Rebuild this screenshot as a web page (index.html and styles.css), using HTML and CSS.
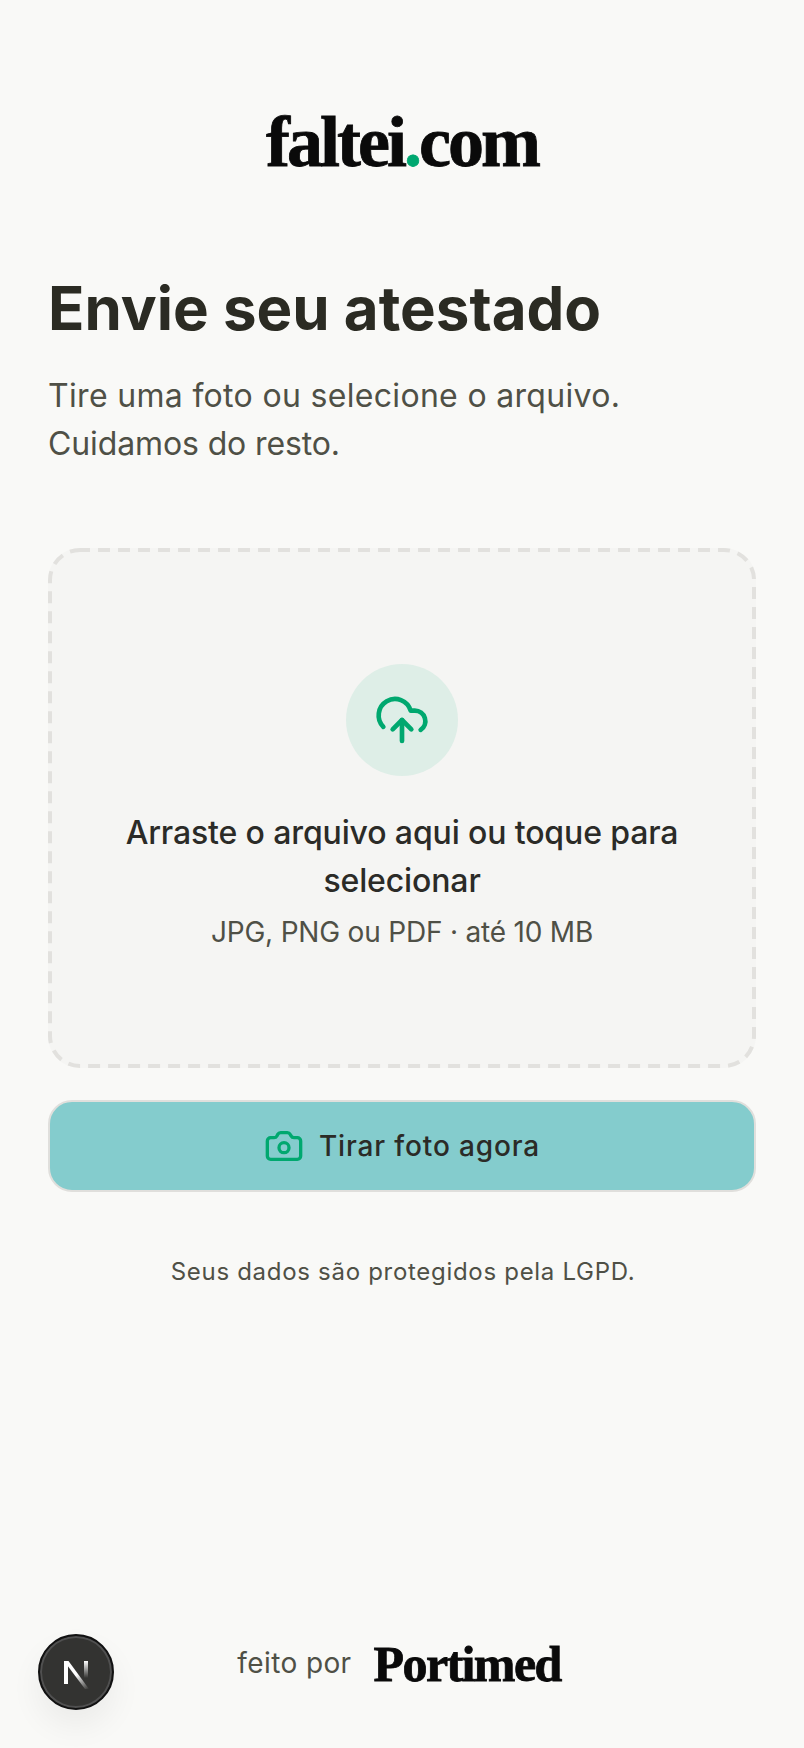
FILE: index.html
```html
<!DOCTYPE html>
<html lang="pt-BR">
<head>
<meta charset="utf-8">
<title>faltei.com</title>
<link rel="stylesheet" href="styles.css">
</head>
<body>
<main class="page">
  <div class="logo">faltei<span class="logo-dot">.</span>com</div>
  <h1 class="title">Envie seu atestado</h1>
  <p class="subtitle"><span class="sub-first">Tire uma foto ou selecione o arquivo.</span><br><span class="sub-second">Cuidamos do resto.</span></p>
  <div class="dropzone">
    <svg class="dash" viewBox="0 0 708 520" fill="none"><rect x="2" y="2" width="704" height="516" rx="30" stroke="#e2e1de" stroke-width="4" stroke-dasharray="12 8" stroke-dashoffset="2"/></svg>
    <div class="drop-icon">
      <svg class="icon-cloud" viewBox="0 0 24 24" fill="none" stroke="currentColor" stroke-width="2" stroke-linecap="round" stroke-linejoin="round"><path d="M4 14.899A7 7 0 1 1 15.71 8h1.79a4.5 4.5 0 0 1 2.5 8.242"/><path d="M12 12v9"/><path d="m16 16-4-4-4 4"/></svg>
    </div>
    <p class="drop-title">Arraste o arquivo aqui ou toque para selecionar</p>
    <p class="drop-hint">JPG, PNG ou PDF · até 10 MB</p>
  </div>
  <button class="camera-btn" type="button">
    <svg class="icon-camera" viewBox="0 0 24 24" fill="none" stroke="currentColor" stroke-width="2" stroke-linecap="round" stroke-linejoin="round"><path d="M13.997 4a2 2 0 0 1 1.76 1.05l.486.9A2 2 0 0 0 18.003 7H20a2 2 0 0 1 2 2v9a2 2 0 0 1-2 2H4a2 2 0 0 1-2-2V9a2 2 0 0 1 2-2h1.997a2 2 0 0 0 1.759-1.048l.489-.904A2 2 0 0 1 10.004 4z"/><circle cx="12" cy="13" r="3"/></svg>
    <span>Tirar foto agora</span>
  </button>
  <p class="privacy">Seus dados são protegidos pela LGPD.</p>
  <footer class="footer">
    <span class="made-by">feito por</span>
    <span class="brand">Portimed</span>
  </footer>
</main>
<div class="next-badge">
  <svg viewBox="0 0 40 40" width="40" height="40" fill="none">
    <defs>
      <linearGradient id="nfade1" x1="16" y1="16" x2="33" y2="37" gradientUnits="userSpaceOnUse"><stop offset="0.3" stop-color="#fff"/><stop offset="1" stop-color="#fff" stop-opacity="0"/></linearGradient>
      <linearGradient id="nfade2" x1="30" y1="9" x2="30" y2="26" gradientUnits="userSpaceOnUse"><stop stop-color="#fff"/><stop offset="1" stop-color="#fff" stop-opacity="0"/></linearGradient>
    </defs>
    <path d="M8 9h4v23H8z" fill="#fff"/>
    <path d="M8 9h4.5L33 37h-4z" fill="url(#nfade1)"/>
    <rect x="28" y="9" width="4" height="17" fill="url(#nfade2)"/>
  </svg>
</div>
</body>
</html>
```
FILE: styles.css
```css
* { box-sizing: border-box; }
html, body { margin: 0; padding: 0; }
body {
  background: #f9f9f7;
  font-family: "Inter", "Liberation Sans", sans-serif;
  color: #2b2b23;
  height: 1748px;
  overflow: hidden;
}
.page {
  height: 1748px;
  padding: 94px 48px 55px;
  display: flex;
  flex-direction: column;
}
.logo {
  font-family: "Liberation Serif", serif;
  font-weight: 700;
  font-size: 72px;
  line-height: 96px;
  letter-spacing: -3px;
  -webkit-text-stroke: 0.8px #0a0a0a;
  color: #0a0a0a;
  text-align: center;
}
.logo-dot { color: #00a870; -webkit-text-stroke: 0.8px #00a870; }
.title {
  margin: 82px 0 0;
  font-size: 60px;
  line-height: 72px;
  font-weight: 700;
  color: #2b2b23;
}
.subtitle {
  margin: 28px 0 0;
  font-size: 32px;
  line-height: 48px;
  color: #4f5046;
}
.sub-first { letter-spacing: 0.32px; }
.sub-second { letter-spacing: -0.12px; }
.dropzone {
  position: relative;
  margin-top: 80px;
  height: 520px;
  border-radius: 32px;
  background: #f5f5f3;
  display: flex;
  flex-direction: column;
  align-items: center;
  justify-content: center;
  padding: 0 68px;
  text-align: center;
}
.dash {
  position: absolute;
  inset: 0;
  width: 100%;
  height: 100%;
  pointer-events: none;
}
.drop-icon {
  width: 112px;
  height: 112px;
  border-radius: 50%;
  background: #deeee7;
  color: #00a86f;
  display: flex;
  align-items: center;
  justify-content: center;
  margin-bottom: 33px;
}
.icon-cloud { width: 56px; height: 56px; }
.drop-title {
  margin: 0;
  font-size: 32px;
  line-height: 48px;
  font-weight: 500;
  letter-spacing: -0.13px;
  color: #2b2b27;
}
.drop-hint {
  margin: 7px 0 0;
  font-size: 28px;
  line-height: 40px;
  letter-spacing: -0.2px;
  color: #4f5046;
}
.camera-btn {
  margin-top: 32px;
  height: 92px;
  flex: none;
  border: 2px solid #e0dfdc;
  border-radius: 24px;
  background: #84cccd;
  display: flex;
  align-items: center;
  justify-content: center;
  gap: 15px;
  padding: 0;
  font-family: inherit;
  font-size: 28px;
  font-weight: 500;
  letter-spacing: 0.85px;
  color: #2b2b27;
}
.icon-camera { width: 40px; height: 40px; color: #00a86f; }
.privacy {
  margin: 64px 0 0;
  padding-left: 2px;
  text-align: center;
  font-size: 24px;
  line-height: 32px;
  letter-spacing: 0.7px;
  color: #4f5046;
}
.footer {
  margin-top: auto;
  padding-right: 6px;
  display: flex;
  justify-content: center;
  align-items: center;
  gap: 22px;
}
.made-by { font-size: 28px; letter-spacing: 0.4px; color: #4f5046; }
.brand {
  padding-top: 3px;
  font-family: "Liberation Serif", serif;
  font-weight: 700;
  font-size: 50px;
  letter-spacing: -1.6px;
  -webkit-text-stroke: 0.8px #0a0a0a;
  color: #0a0a0a;
}
.next-badge {
  position: fixed;
  left: 38px;
  top: 1634px;
  width: 76px;
  height: 76px;
  border-radius: 50%;
  background: #333331;
  border: 2px solid #111;
  box-shadow: inset 0 0 0 2px #505050, 0 16px 32px rgba(0,0,0,.06);
  display: flex;
  align-items: center;
  justify-content: center;
}
```
